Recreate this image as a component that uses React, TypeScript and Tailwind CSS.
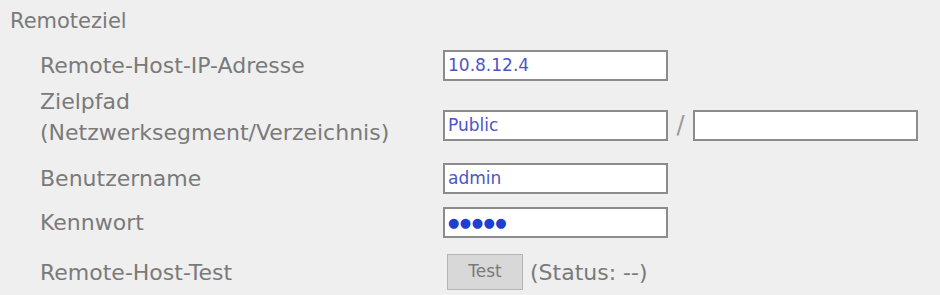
import React from "react";

const font = { fontFamily: '"DejaVu Sans", Verdana, sans-serif' };

function TextBox({ value, password = false }: { value: string; password?: boolean }) {
  return (
    <div className="w-[225px] h-[31px] bg-white border-2 border-[#8c8c8c] flex items-center pl-[3px] overflow-hidden">
      {password ? (
        <span className="text-[#1f3fd0] text-[13px] tracking-[0.5px] leading-none">●●●●●</span>
      ) : (
        <span className="text-[#4b56c4] text-[17px] leading-none">{value}</span>
      )}
    </div>
  );
}

export default function App() {
  return (
    <div className="w-[940px] h-[295px] bg-[#efefef] text-[#7a7a7a] overflow-hidden" style={font}>
      <div className="h-[44px] flex items-center pl-[10px] text-[21px]">Remoteziel</div>
      <div className="flex flex-col text-[22px]">
        <div className="h-[42px] flex items-center">
          <div className="w-[443px] pl-[40px]">Remote-Host-IP-Adresse</div>
          <TextBox value="10.8.12.4" />
        </div>
        <div className="h-[70px] flex items-start">
          <div className="w-[443px] pl-[40px] leading-[31px]">
            Zielpfad
            <br />
            (Netzwerksegment/Verzeichnis)
          </div>
          <div className="mt-[21px] flex items-center">
            <TextBox value="Public" />
            <span className="w-[25px] text-center text-[24px] text-[#9a9a9a]">/</span>
            <TextBox value="" />
          </div>
        </div>
        <div className="h-[44px] flex items-center">
          <div className="w-[443px] pl-[40px]">Benutzername</div>
          <TextBox value="admin" />
        </div>
        <div className="h-[44px] flex items-center">
          <div className="w-[443px] pl-[40px]">Kennwort</div>
          <TextBox value="" password />
        </div>
        <div className="h-[56px] flex items-center">
          <div className="w-[447px] pl-[40px]">Remote-Host-Test</div>
          <div className="w-[76px] h-[36px] bg-[#d8d8d8] border border-[#b4b4b4] flex items-center justify-center text-[17px] text-[#7a7a7a]">
            Test
          </div>
          <span className="ml-[7px]">(Status: --)</span>
        </div>
      </div>
    </div>
  );
}
